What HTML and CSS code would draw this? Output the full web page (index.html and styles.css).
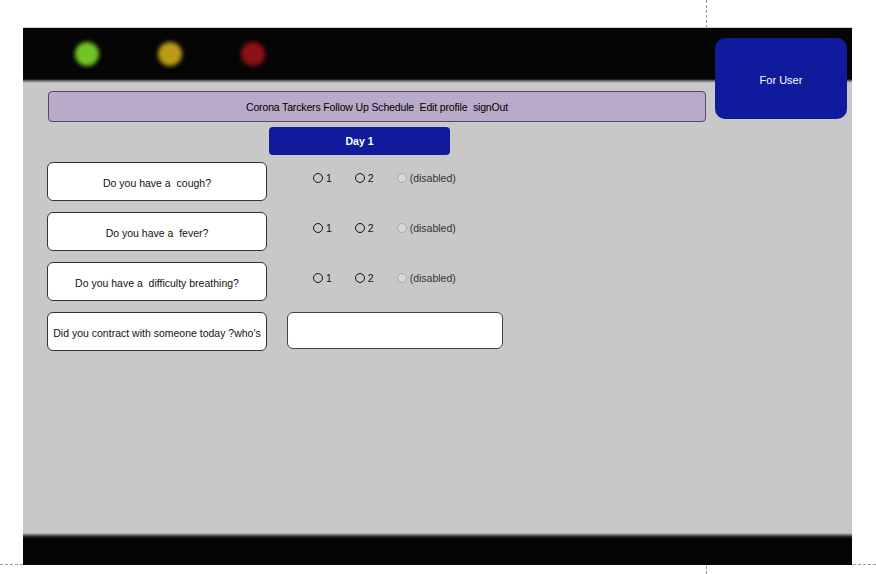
FILE: index.html
```html
<!DOCTYPE html>
<html lang="en">
<head>
  <meta charset="UTF-8">
  <meta name="viewport" content="width=device-width, initial-scale=1.0">
  <title>Corona Tarckers</title>
  <link rel="stylesheet" href="styles.css">
</head>
<body>
  <div class="guide-v"></div>
  <div class="guide-h"></div>

  <div class="frame">
    <div class="topbar">
      <span class="light green"></span>
      <span class="light yellow"></span>
      <span class="light red"></span>
    </div>

    <div class="user-box">For User</div>

    <div class="content">
      <nav class="menu">Corona Tarckers Follow Up Schedule  Edit profile  signOut</nav>

      <div class="day-row">
        <div class="day">Day 1</div>
      </div>

      <div class="questions">
        <div class="q-row">
          <div class="card">Do you have a  cough?</div>
          <div class="radios">
            <label class="opt"><input type="radio" name="cough">1</label>
            <label class="opt"><input type="radio" name="cough">2</label>
            <label class="opt off"><input type="radio" name="cough" disabled>(disabled)</label>
          </div>
        </div>
        <div class="q-row">
          <div class="card">Do you have a  fever?</div>
          <div class="radios">
            <label class="opt"><input type="radio" name="fever">1</label>
            <label class="opt"><input type="radio" name="fever">2</label>
            <label class="opt off"><input type="radio" name="fever" disabled>(disabled)</label>
          </div>
        </div>
        <div class="q-row">
          <div class="card">Do you have a  difficulty breathing?</div>
          <div class="radios">
            <label class="opt"><input type="radio" name="breath">1</label>
            <label class="opt"><input type="radio" name="breath">2</label>
            <label class="opt off"><input type="radio" name="breath" disabled>(disabled)</label>
          </div>
        </div>
        <div class="q-row">
          <div class="card">Did you contract with someone today ?who's</div>
          <input type="text" class="who">
        </div>
      </div>
    </div>

    <div class="bottombar"></div>
  </div>
</body>
</html>
```

FILE: styles.css
```css
body {
  margin: 0;
  padding: 0;
  background-color: white;
  font-family: 'Liberation Sans', Arial, sans-serif;
  font-size: 10.5px;
  color: #111;
}
.guide-v {
  position: absolute;
  left: 706px;
  top: 0;
  height: 574px;
  border-left: 1px dashed #9a9a9a;
}
.guide-h {
  position: absolute;
  left: 0;
  top: 564px;
  width: 876px;
  border-top: 1px dashed #9a9a9a;
}
.frame {
  position: relative;
  width: 829px;
  height: 537px;
  margin: 27px 0 0 23px;
  border-top: 1px solid #d0d0d0;
  background-color: #c8c8c8;
  display: flex;
  flex-direction: column;
}
.topbar {
  height: 55px;
  background: linear-gradient(#050505 0, #050505 51px, #7a7a7a 53px, #c8c8c8 55px);
  display: flex;
  align-items: flex-start;
  gap: 59px;
  padding: 14px 0 0 52px;
  box-sizing: border-box;
}
.light {
  width: 24px;
  height: 24px;
  border-radius: 50%;
  filter: blur(2.2px);
}
.green { background-color: #72c422; }
.yellow { background-color: #bb9b18; }
.red { background-color: #8c1015; }
.user-box {
  position: absolute;
  left: 692px;
  top: 10px;
  width: 132px;
  height: 81px;
  background-color: #0f1a9c;
  border-radius: 10px;
  color: white;
  display: flex;
  align-items: center;
  justify-content: center;
  font-size: 11px;
  padding-top: 2px;
  box-sizing: border-box;
}
.content {
  flex: 1;
  padding: 8px 0 0 24px;
}
.menu {
  width: 658px;
  height: 31px;
  margin-left: 1px;
  box-sizing: border-box;
  background-color: #b8aac8;
  border: 1px solid #54456a;
  border-radius: 4px;
  display: flex;
  align-items: center;
  justify-content: center;
  padding-top: 1px;
  white-space: pre;
  letter-spacing: -0.15px;
  color: #000;
}
.day-row {
  padding: 5px 0 0 222px;
}
.day {
  width: 181px;
  height: 28px;
  background-color: #0f1a9c;
  border-radius: 4px;
  color: white;
  font-weight: bold;
  display: flex;
  align-items: center;
  justify-content: center;
}
.questions {
  display: flex;
  flex-direction: column;
  gap: 11px;
  padding-top: 7px;
}
.q-row {
  display: flex;
  align-items: flex-start;
}
.card {
  width: 220px;
  height: 39px;
  box-sizing: border-box;
  background-color: white;
  border: 1.5px solid #333;
  border-radius: 6px;
  display: flex;
  align-items: center;
  justify-content: center;
  padding-top: 2px;
  white-space: pre;
}
.radios {
  display: flex;
  align-items: center;
  margin: 10px 0 0 46px;
}
.opt {
  display: flex;
  align-items: center;
  gap: 3px;
  margin-right: 23px;
}
.opt input {
  appearance: none;
  width: 10px;
  height: 10px;
  margin: 0;
  border: 1.2px solid #111;
  border-radius: 50%;
  background: transparent;
  box-sizing: border-box;
}
.opt.off {
  color: #333;
}
.opt.off input {
  border-color: #a8a8a8;
  background-color: #d8d8d8;
}
.who {
  width: 216px;
  height: 37px;
  box-sizing: border-box;
  margin-left: 20px;
  border: 1.5px solid #444;
  border-radius: 6px;
  background-color: white;
}
.bottombar {
  height: 32px;
  background: linear-gradient(#c8c8c8 0, #6a6a6a 2px, #1a1a1a 4px, #050505 6px);
}
```
